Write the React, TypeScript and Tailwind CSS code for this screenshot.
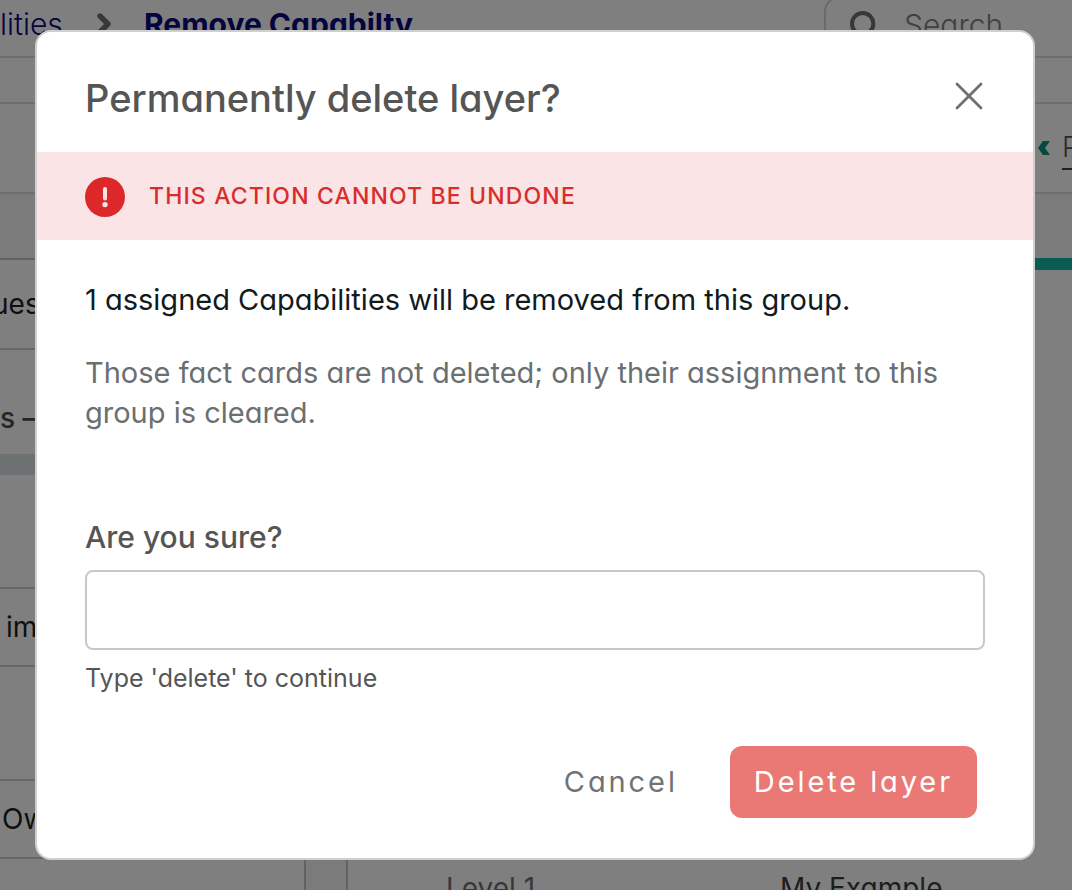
import { useState } from 'react';
import type { ReactNode } from 'react';
import { ChevronRight, Search, X } from 'lucide-react';

function Row({ children }: { children?: ReactNode }) {
  return <div className="flex items-center border-b-2 border-[#cfcfcf] whitespace-nowrap">{children}</div>;
}

function PageHeader() {
  return (
    <header className="flex h-[58px] shrink-0 justify-between border-b-2 border-[#dcdcdc]">
      <nav className="flex h-12 items-center text-[30px] text-[#08087c]" aria-label="Breadcrumb">
        <a href="#capabilities" className="w-[88px] font-light">lities</a>
        <ChevronRight size={32} strokeWidth={4} className="text-[#707070]" />
        <a href="#remove" className="ml-6 font-bold">Remove Capabilty</a>
      </nav>
      <label className="-mt-1 flex h-14 w-[248px] items-center gap-6 rounded-tl-2xl border-t-2 border-l-2 border-[#d4d4d4] pl-[22px]">
        <Search size={32} strokeWidth={3} className="shrink-0 text-[#707070]" />
        <input
          type="search"
          aria-label="Search"
          placeholder="Search"
          className="min-w-0 flex-1 bg-transparent text-[30px] font-light outline-none placeholder:text-[#808080]"
        />
      </label>
    </header>
  );
}

function Page() {
  return (
    <div className="flex h-screen flex-col overflow-hidden bg-white text-[#1c1f20]">
      <PageHeader />
      <div className="h-[46px] shrink-0 border-b-2 border-[#dcdcdc]" />
      <div className="flex h-[90px] shrink-0 items-center justify-end border-b-2 border-[#dcdcdc]">
        <svg viewBox="0 0 12 14" className="mr-3 h-[14px] w-3" aria-hidden="true">
          <path d="M5 0h7L7 7l5 7H5L0 7z" fill="#0f9280" />
        </svg>
        <a href="#previous" className="w-[10px] overflow-hidden border-b-2 border-[#404040] text-[28px] font-light text-[#555]">
          P
        </a>
      </div>

      <main className="flex flex-1 bg-[#f6f6f6] pt-16">
        <section className="w-[306px] border-t-2 border-r-2 border-[#c4c4c4] bg-white text-[28px]">
          <Row><span className="-ml-2 py-6 leading-10">ues</span></Row>
          <div className="h-[104px] pt-12 text-[28px] leading-10 font-medium text-[#4a4a4a]">s –</div>
          <div className="h-[21px] bg-[#dce2e5]" />
          <Row><div className="h-28" /></Row>
          <Row><span className="py-[18px] pl-[6px] leading-10">im</span></Row>
          <Row><div className="h-28" /></Row>
          <Row><span className="py-[18px] pl-[2px] leading-10">Ow</span></Row>
        </section>
        <section className="ml-10 flex-1 border-t-[12px] border-l-2 border-t-[#12b8a4] border-l-[#c4c4c4] bg-white pt-[598px]">
          <div className="flex pl-[98px] text-[28px] leading-10">
            <span className="w-[334px] text-[#707070]">Level 1</span>
            <span className="text-[#3c3c3c]">My Example</span>
          </div>
        </section>
      </main>
    </div>
  );
}

function AlertIcon() {
  return (
    <svg viewBox="0 0 40 40" className="size-10 shrink-0" aria-hidden="true">
      <circle cx="20" cy="20" r="20" fill="#dc2828" />
      <path d="M20 12v9.5" stroke="#fbe4e6" strokeWidth="4" strokeLinecap="round" />
      <circle cx="20" cy="27.6" r="2.7" fill="#fbe4e6" />
    </svg>
  );
}

function DeleteDialog() {
  const [value, setValue] = useState('');

  return (
    <div className="fixed inset-0 flex items-start justify-center bg-black/50 pt-[30px] pr-[37px] pl-[35px]">
      <div
        role="dialog"
        aria-modal="true"
        aria-labelledby="dialog-title"
        className="w-full rounded-2xl border-2 border-[#cfcfcf] bg-white"
      >
        <div className="flex h-[120px] items-center justify-between px-12 pt-2">
          <h2 id="dialog-title" className="pt-1 text-[38px] font-medium text-[#555]">Permanently delete layer?</h2>
          <button type="button" aria-label="Close" className="-mr-2 text-[#707070]">
            <X size={48} strokeWidth={1.4} />
          </button>
        </div>

        <div className="flex h-[88px] items-center gap-6 bg-[#fae4e5] px-12 pt-px">
          <AlertIcon />
          <p className="text-[23px] font-medium tracking-wider text-[#d92d2d]">THIS ACTION CANNOT BE UNDONE</p>
        </div>

        <div className="px-12 pt-10 pb-10">
          <p className="text-[29px] leading-10 text-[#111a1c]">
            1 assigned Capabilities will be removed from this group.
          </p>
          <p className="mt-[33px] text-[29px] leading-10 text-[#6a6f72]">
            Those fact cards are not deleted; only their assignment to this group is cleared.
          </p>

          <label htmlFor="confirm" className="mt-[84px] block text-[30px] leading-10 font-medium text-[#555]">
            Are you sure?
          </label>
          <input
            id="confirm"
            type="text"
            value={value}
            onChange={e => setValue(e.target.value)}
            aria-describedby="confirm-hint"
            className="mt-[13px] block h-20 w-full rounded-lg border-2 border-[#c8c8c8] px-4 text-[29px] outline-none"
          />
          <p id="confirm-hint" className="mt-3 text-[25px] leading-8 text-[#555]">Type 'delete' to continue</p>

          <div className="mt-[52px] flex items-center justify-end gap-7 pr-2">
            <button type="button" className="h-[72px] px-6 text-[29px] tracking-widest text-[#707376]">
              Cancel
            </button>
            <button type="button" className="h-[72px] rounded-xl bg-[#ea7976] px-6 text-[29px] tracking-widest text-white">
              Delete layer
            </button>
          </div>
        </div>
      </div>
    </div>
  );
}

export default function App() {
  return (
    <div className="font-['Inter',sans-serif] [font-feature-settings:'cv11']">
      <Page />
      <DeleteDialog />
    </div>
  );
}
